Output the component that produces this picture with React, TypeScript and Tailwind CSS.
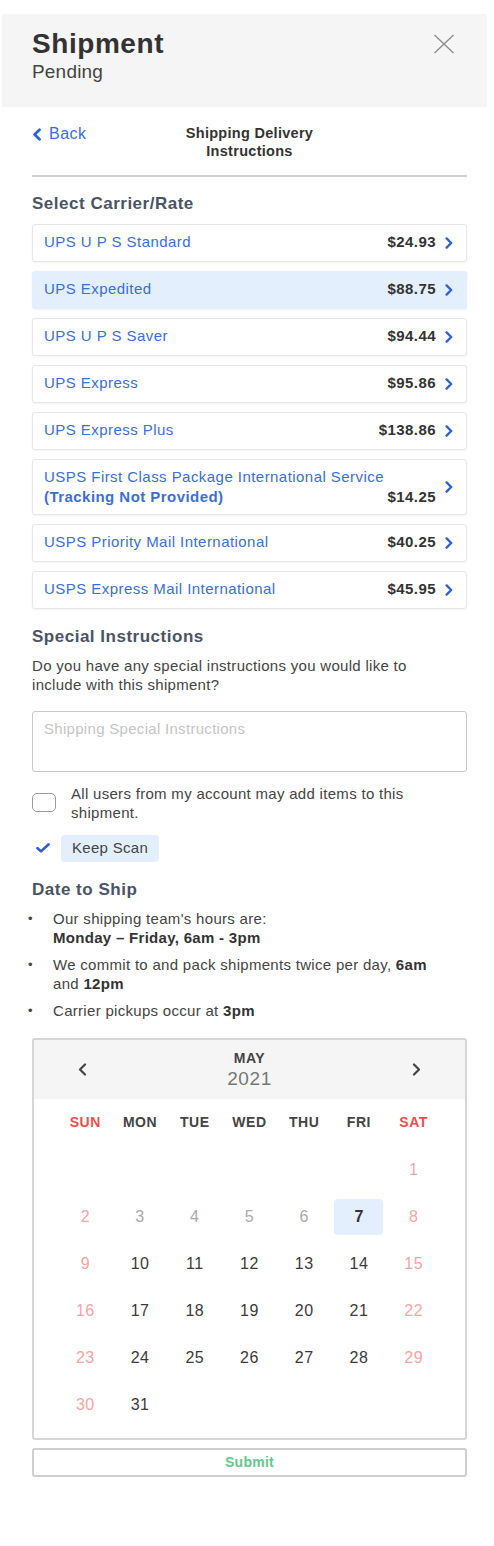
import React from 'react';

type Rate = { name: string; price: string; note?: string; selected?: boolean };

const rates: Rate[] = [
  { name: 'UPS U P S Standard', price: '$24.93' },
  { name: 'UPS Expedited', price: '$88.75', selected: true },
  { name: 'UPS U P S Saver', price: '$94.44' },
  { name: 'UPS Express', price: '$95.86' },
  { name: 'UPS Express Plus', price: '$138.86' },
  { name: 'USPS First Class Package International Service', price: '$14.25', note: '(Tracking Not Provided)' },
  { name: 'USPS Priority Mail International', price: '$40.25' },
  { name: 'USPS Express Mail International', price: '$45.95' },
];

const weekdays = ['SUN', 'MON', 'TUE', 'WED', 'THU', 'FRI', 'SAT'];

const Chevron = ({ className = '' }: { className?: string }) => (
  <svg width="8" height="12" viewBox="0 0 8 12" className={className}>
    <path d="M1.6 1.4 L6.2 6 L1.6 10.6" fill="none" stroke="#2f63d3" strokeWidth="2.4" strokeLinecap="round" strokeLinejoin="round" />
  </svg>
);

const RateRow = ({ rate }: { rate: Rate }) => {
  const box = rate.selected
    ? 'bg-[#e3effd] border-[#e3effd]'
    : 'bg-white border-[#e7e7e7]';
  if (rate.note) {
    return (
      <div className={`flex h-[56px] items-center rounded-[3px] border pl-[11px] pr-[13px] shadow-[0_1px_2px_rgba(0,0,0,0.05)] ${box}`}>
        <div className="min-w-0 flex-1 whitespace-nowrap text-[15px] leading-[20px] tracking-[0.03em] text-[#3b6fd4]">
          <div>{rate.name}</div>
          <div className="font-bold">{rate.note}</div>
        </div>
        <span className="mb-[7px] self-end text-[15px] font-bold leading-[20px] tracking-[0.03em] text-[#333]">{rate.price}</span>
        <Chevron className="ml-[9px]" />
      </div>
    );
  }
  return (
    <div className={`flex h-[38px] items-center rounded-[3px] border pl-[11px] pr-[13px] shadow-[0_1px_2px_rgba(0,0,0,0.05)] ${box}`}>
      <span className="flex-1 text-[15px] tracking-[0.03em] text-[#3b6fd4]">{rate.name}</span>
      <span className="text-[15px] font-bold tracking-[0.03em] text-[#333]">{rate.price}</span>
      <Chevron className="ml-[9px]" />
    </div>
  );
};

const dayClass = (day: number, col: number) => {
  if (col === 0 || col === 6) return 'text-[#f5a5a5]';
  if (day < 7) return 'text-[#aaaaaa]';
  return 'text-[#3a3a3a]';
};

const Calendar = () => {
  // May 2021 starts on a Saturday
  const cells: (number | null)[] = [...Array(6).fill(null)];
  for (let d = 1; d <= 31; d++) cells.push(d);
  while (cells.length % 7) cells.push(null);
  const weeks: (number | null)[][] = [];
  for (let i = 0; i < cells.length; i += 7) weeks.push(cells.slice(i, i + 7));

  return (
    <div className="mt-[18px] overflow-hidden rounded-[3px] border-2 border-[#d6d6d6]">
      <div className="flex h-[59px] items-center justify-between bg-[#f5f5f5] px-[44px]">
        <svg width="9" height="13" viewBox="0 0 9 13">
          <path d="M7 1.5 L2 6.5 L7 11.5" fill="none" stroke="#444" strokeWidth="2.2" strokeLinecap="round" strokeLinejoin="round" />
        </svg>
        <div className="flex flex-col items-center pt-[2px]">
          <span className="text-[14px] font-bold leading-[17px] tracking-[0.04em] text-[#444]">MAY</span>
          <span className="text-[19px] leading-[24px] tracking-[0.03em] text-[#777]">2021</span>
        </div>
        <svg width="9" height="13" viewBox="0 0 9 13">
          <path d="M2 1.5 L7 6.5 L2 11.5" fill="none" stroke="#444" strokeWidth="2.2" strokeLinecap="round" strokeLinejoin="round" />
        </svg>
      </div>
      <div className="px-[24px] pb-[9px]">
        <div className="grid h-[48px] grid-cols-7 items-center">
          {weekdays.map((w, i) => (
            <span
              key={w}
              className={`text-center text-[14px] font-bold tracking-[0.04em] ${i === 0 || i === 6 ? 'text-[#ec4f4a]' : 'text-[#444]'}`}
            >
              {w}
            </span>
          ))}
        </div>
        {weeks.map((week, wi) => (
          <div key={wi} className="grid h-[47px] grid-cols-7 items-center">
            {week.map((d, ci) => (
              <div key={ci} className="flex justify-center">
                {d === null ? null : d === 7 ? (
                  <span className="flex h-[36px] w-[49px] items-center justify-center rounded-[4px] bg-[#e3effd] text-[16px] font-bold text-[#333]">
                    7
                  </span>
                ) : (
                  <span className={`text-[16px] tracking-[0.03em] ${dayClass(d, ci)}`}>{d}</span>
                )}
              </div>
            ))}
          </div>
        ))}
      </div>
    </div>
  );
};

export default function App() {
  return (
    <div className="min-h-screen bg-white pt-[14px] font-['Liberation_Sans',Arial,sans-serif] text-[#333]">
      {/* Header */}
      <div className="ml-[2px] mr-[7px] flex h-[93px] items-start justify-between bg-[#f5f5f5] pl-[30px] pr-[32px] pt-[14px]">
        <div>
          <h1 className="text-[28px] font-bold leading-[32px] tracking-[0.02em] text-[#333]">Shipment</h1>
          <p className="mt-[1px] text-[19px] leading-[22px] tracking-[0.01em] text-[#444]">Pending</p>
        </div>
        <svg width="22" height="20" viewBox="0 0 22 20" className="mt-[6px]">
          <path d="M1.5 1 L20.5 19 M20.5 1 L1.5 19" stroke="#8a8a8a" strokeWidth="1.3" />
        </svg>
      </div>

      <div className="pl-[32px] pr-[27px]">
        {/* Nav */}
        <div className="grid grid-cols-[1fr_auto_1fr] items-start pt-[17px]">
          <div className="flex items-center gap-[7px] pt-[1px] text-[#3b6fd4]">
            <svg width="10" height="13" viewBox="0 0 10 13">
              <path d="M7.5 1.8 L2.6 6.5 L7.5 11.2" fill="none" stroke="#2f63d3" strokeWidth="2.8" strokeLinecap="round" strokeLinejoin="round" />
            </svg>
            <span className="text-[16px] leading-[18px] tracking-[0.03em]">Back</span>
          </div>
          <div className="text-center text-[14.5px] font-bold leading-[18px] tracking-[0.02em] text-[#333]">
            Shipping Delivery
            <br />
            Instructions
          </div>
          <div />
        </div>
        <div className="mt-[15px] h-[1.5px] bg-[#cfcfcf]" />

        {/* Carrier */}
        <h2 className="mt-[16px] text-[17px] font-bold leading-[22px] tracking-[0.03em] text-[#4a5464]">Select Carrier/Rate</h2>
        <div className="mt-[9px] flex flex-col gap-[9px]">
          {rates.map((r) => (
            <RateRow key={r.name} rate={r} />
          ))}
        </div>

        {/* Special instructions */}
        <h2 className="mt-[17px] text-[17px] font-bold leading-[22px] tracking-[0.03em] text-[#4a5464]">Special Instructions</h2>
        <p className="mt-[8px] text-[15px] leading-[19px] tracking-[0.02em] text-[#444]">
          Do you have any special instructions you would like to
          <br />
          include with this shipment?
        </p>
        <textarea
          placeholder="Shipping Special Instructions"
          className="mt-[17px] block h-[61px] w-full resize-none rounded-[3px] border-[1.5px] border-[#c9c9c9] px-[11px] py-[6px] text-[15px] tracking-[0.02em] placeholder:text-[#c5c5c5] focus:outline-none"
        />

        <div className="mt-[12px] flex items-center gap-[15px]">
          <div className="h-[19px] w-[24px] shrink-0 rounded-[5px] border-[1.5px] border-[#9a9a9a] bg-white" />
          <span className="text-[15px] leading-[19px] tracking-[0.02em] text-[#444]">
            All users from my account may add items to this
            <br />
            shipment.
          </span>
        </div>

        <div className="mt-[13px] flex items-center">
          <svg width="14" height="10" viewBox="0 0 14 10" className="ml-[4px]">
            <path d="M1.5 5.2 L5 8.4 L12.5 1.5" fill="none" stroke="#2c5fcc" strokeWidth="2.6" strokeLinecap="round" strokeLinejoin="round" />
          </svg>
          <span className="ml-[11px] flex h-[27px] items-center rounded-[4px] bg-[#e3effd] px-[11px] text-[15px] tracking-[0.02em] text-[#444]">
            Keep Scan
          </span>
        </div>

        {/* Date to ship */}
        <h2 className="mt-[17px] text-[17px] font-bold leading-[22px] tracking-[0.03em] text-[#4a5464]">Date to Ship</h2>
        <ul className="mt-[8px] flex flex-col gap-[8px] text-[15px] leading-[19px] tracking-[0.02em] text-[#444]">
          <li className="flex">
            <span className="-ml-[4px] w-[25px] shrink-0 text-[13px]">•</span>
            <span>
              Our shipping team's hours are:
              <br />
              <b className="text-[#333]">Monday – Friday, 6am - 3pm</b>
            </span>
          </li>
          <li className="flex">
            <span className="-ml-[4px] w-[25px] shrink-0 text-[13px]">•</span>
            <span>
              We commit to and pack shipments twice per day, <b className="text-[#333]">6am</b>
              <br />
              and <b className="text-[#333]">12pm</b>
            </span>
          </li>
          <li className="flex">
            <span className="-ml-[4px] w-[25px] shrink-0 text-[13px]">•</span>
            <span>
              Carrier pickups occur at <b className="text-[#333]">3pm</b>
            </span>
          </li>
        </ul>

        <Calendar />

        <button className="mt-[8px] flex h-[29px] w-full items-center justify-center rounded-[3px] border-2 border-[#cfcfcf] bg-white text-[14px] font-bold tracking-[0.02em] text-[#63c98c]">
          Submit
        </button>
      </div>
    </div>
  );
}
